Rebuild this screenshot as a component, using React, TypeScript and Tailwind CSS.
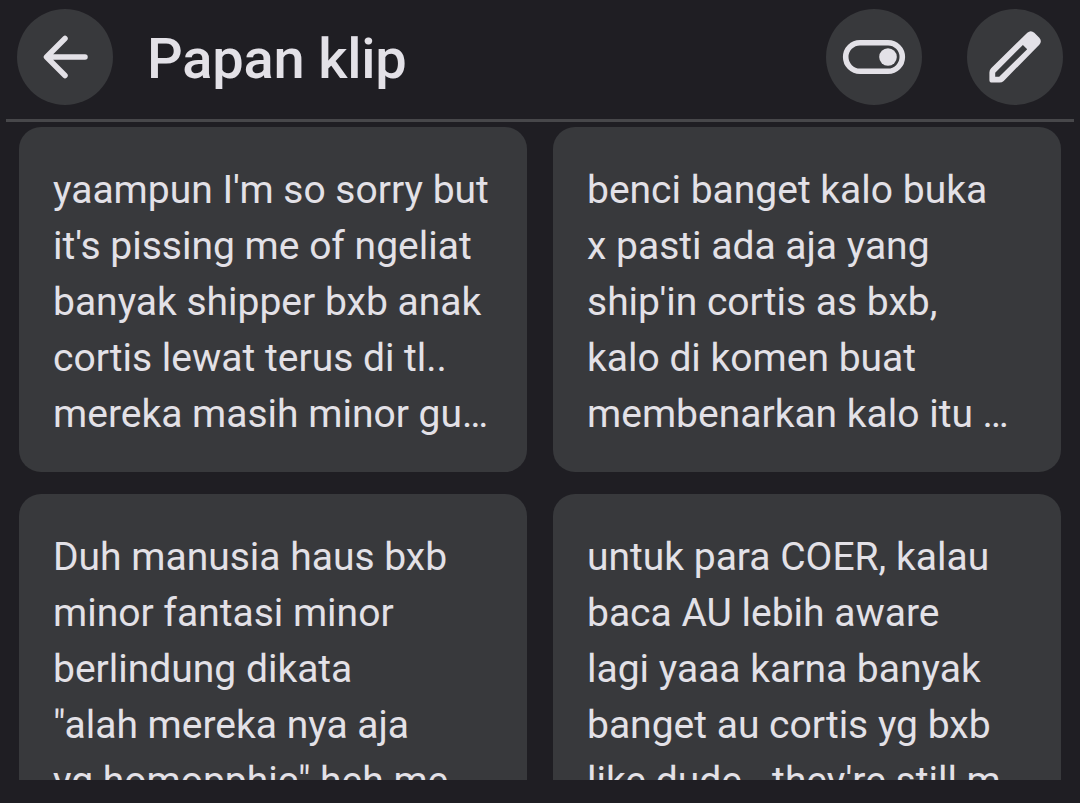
import type { ReactNode } from 'react'

interface Clip {
  id: number
  lines: string[]
}

const CLIPS: Clip[] = [
  {
    id: 1,
    lines: ["yaampun I'm so sorry but", "it's pissing me of ngeliat", 'banyak shipper bxb anak', 'cortis lewat terus di tl..', 'mereka masih minor gu…'],
  },
  {
    id: 2,
    lines: ['benci banget kalo buka', 'x pasti ada aja yang', "ship'in cortis as bxb,", 'kalo di komen buat', 'membenarkan kalo itu …'],
  },
  {
    id: 3,
    lines: ['Duh manusia haus bxb', 'minor fantasi minor', 'berlindung dikata', '"alah mereka nya aja', 'yg homopphic" heh me…'],
  },
  {
    id: 4,
    lines: ['untuk para COER, kalau', 'baca AU lebih aware', 'lagi yaaa karna banyak', 'banget au cortis yg bxb', "like dude.. they're still m…"],
  },
]

function RoundButton({ label, children }: { label: string; children: ReactNode }) {
  return (
    <button aria-label={label} className="size-24 shrink-0 rounded-full bg-[#38393c]">
      <svg viewBox="0 0 96 96" className="size-24" fill="none">
        {children}
      </svg>
    </button>
  )
}

function ClipCard({ clip }: { clip: Clip }) {
  return (
    <article className="h-[345px] rounded-[22px] bg-[#38393c] pt-[35px] pl-[34px] text-[39px] leading-[56px] whitespace-nowrap">
      {clip.lines.map(line => (
        <p key={line}>{line}</p>
      ))}
    </article>
  )
}

export default function App() {
  return (
    <div className="flex h-[803px] w-[1080px] flex-col overflow-hidden bg-[#1f1e23] font-[Roboto,sans-serif] text-[#e3e1e7]">
      <header className="flex h-[119px] shrink-0 items-start pt-[9px] pr-[17px] pl-[17px]">
        <RoundButton label="Kembali">
          <path d="M68 48H30M48 29.5 29.5 48 48 66.5" stroke="currentColor" strokeWidth="5.5" strokeLinecap="round" strokeLinejoin="round" />
        </RoundButton>
        <h1 className="ml-[34px] flex-1 text-[56px] leading-[100px] font-medium tracking-[-0.2px]">Papan klip</h1>
        <div className="flex gap-[45px]">
          <RoundButton label="Aktifkan papan klip">
            <rect x="19.7" y="33.7" width="56.6" height="28.6" rx="14.3" stroke="currentColor" strokeWidth="5.6" />
            <circle cx="62" cy="48" r="8.8" fill="currentColor" />
          </RoundButton>
          <RoundButton label="Edit">
            <path
              fill="currentColor"
              fillRule="evenodd"
              d="M25 73.6a2.6 2.6 0 0 1-2.6-2.6V63.400q0-2.400 1.700-4.100L60.300 23.700Q63.800 20.600 67.300 23.700L72.300 28.700Q75.400 32.200 72.300 35.700L36.700 71.900Q35 73.600 32.600 73.600ZM28.200 67.800H32.200L60.200 40.200 55.900 35.900 28.200 63.800Z"
            />
          </RoundButton>
        </div>
      </header>
      <hr className="mx-1.5 h-[3px] shrink-0 border-0 bg-[#47474a]" />
      <main className="mt-[5px] h-[653px] shrink-0 overflow-hidden px-[19px]">
        <div className="grid grid-cols-2 gap-x-[26px] gap-y-[22px]">
          {CLIPS.map(clip => (
            <ClipCard key={clip.id} clip={clip} />
          ))}
        </div>
      </main>
    </div>
  )
}
